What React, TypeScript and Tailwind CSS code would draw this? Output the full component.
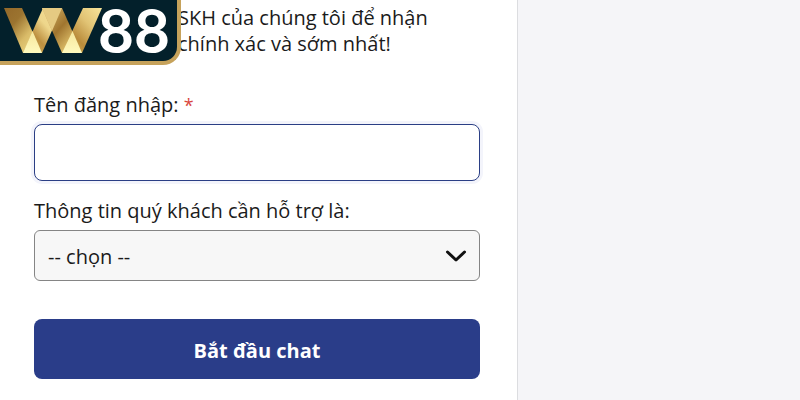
import React from "react";

function Logo() {
  return (
    <div className="absolute left-0 top-0 flex h-[65px] w-[181px] rounded-br-[18px] border-b-4 border-r-4 border-[#c6a25b] bg-[#03202b]">
      <svg viewBox="0 0 102 54" className="ml-1 h-[54px] w-[102px] shrink-0" aria-hidden="true">
        <defs>
          <linearGradient id="g1" x1="0" y1="0" x2="1" y2="1">
            <stop offset="0" stopColor="#94692a" />
            <stop offset="0.3" stopColor="#9c7430" />
            <stop offset="0.6" stopColor="#d9bb68" />
            <stop offset="1" stopColor="#f4e08e" />
          </linearGradient>
          <linearGradient id="g2" x1="1" y1="0" x2="0" y2="1">
            <stop offset="0" stopColor="#f5de97" />
            <stop offset="0.4" stopColor="#eed68b" />
            <stop offset="0.65" stopColor="#bd9040" />
            <stop offset="1" stopColor="#d7b55d" />
          </linearGradient>
          <linearGradient id="g3" x1="0" y1="0" x2="1" y2="1">
            <stop offset="0" stopColor="#ddbe72" />
            <stop offset="0.45" stopColor="#a0752f" />
            <stop offset="0.7" stopColor="#d2b05d" />
            <stop offset="1" stopColor="#f1dc8d" />
          </linearGradient>
          <linearGradient id="g4" x1="1" y1="0" x2="0" y2="1">
            <stop offset="0" stopColor="#f7e59b" />
            <stop offset="0.35" stopColor="#e1c374" />
            <stop offset="0.65" stopColor="#ba8c3b" />
            <stop offset="1" stopColor="#d9b85d" />
          </linearGradient>
          <linearGradient id="g5" x1="0" y1="0" x2="0" y2="1">
            <stop offset="0" stopColor="#f5e69c" />
            <stop offset="1" stopColor="#fff9bd" />
          </linearGradient>
        </defs>
        <polygon points="0,8 18,8 38,53 19,53" fill="url(#g1)" />
        <polygon points="39,8 58,8 38,53 19,53" fill="url(#g2)" />
        <polygon points="38,8 58,8 78,53 58,53" fill="url(#g3)" />
        <polygon points="38,8 58,8 48,31 44,22" fill="#e5ca82" />
        <polygon points="79,8 98,8 78,53 58,53" fill="url(#g4)" />
        <polygon points="28.5,31 38,53 19,53" fill="url(#g5)" />
        <polygon points="68.5,31 78,53 58,53" fill="url(#g5)" />
      </svg>
      <span className="-ml-2 font-[Lato,sans-serif] text-[62px] font-bold leading-[58px] text-white">88</span>
    </div>
  );
}

export default function App() {
  return (
    <div className="relative flex min-h-screen bg-[#f5f5f8] font-['Open_Sans','Noto_Sans',sans-serif] text-[20px] leading-[26px] text-[#1b1b1b]">
      <main className="min-w-0 flex-1 border-r border-[#dcdde0] bg-white pb-5 pl-[34px] pr-[37px] pt-[5px]">
        <p className="pl-36">
          SKH của chúng tôi để nhận
          <br />
          chính xác và sớm nhất!
        </p>
        <form className="mt-[35px] flex flex-col" onSubmit={(e) => e.preventDefault()}>
          <label htmlFor="username">
            Tên đăng nhập: <span className="text-lg leading-none text-[#d9463e]">*</span>
          </label>
          <input
            id="username"
            type="text"
            required
            className="mt-[6px] h-[57px] w-full rounded-lg border border-[#2b3f85] bg-white px-3 shadow-[0_0_0_3px_#f3f4fb] outline-none"
          />
          <label htmlFor="topic" className="mt-[17px]">
            Thông tin quý khách cần hỗ trợ là:
          </label>
          <div className="relative mt-[6px]">
            <select
              id="topic"
              className="block h-[51px] w-full appearance-none rounded-md border border-[#858585] bg-[#f7f7f7] pl-[13px] pr-12 pt-[2px] outline-none"
            >
              <option>-- chọn --</option>
            </select>
            <svg
              viewBox="0 0 22 14"
              className="pointer-events-none absolute right-[13px] top-[19px] h-[14px] w-[22px]"
              fill="none"
              stroke="#111"
              strokeWidth="3"
              strokeLinecap="round"
              strokeLinejoin="round"
              aria-hidden="true"
            >
              <path d="M2.5 3l8.5 8 8.5-8" />
            </svg>
          </div>
          <button type="submit" className="mt-[38px] h-[60px] w-full rounded-lg bg-[#2a3d89] pt-1 font-bold text-white">
            Bắt đầu chat
          </button>
        </form>
      </main>
      <aside className="w-[282px] shrink-0" />
      <Logo />
    </div>
  );
}
